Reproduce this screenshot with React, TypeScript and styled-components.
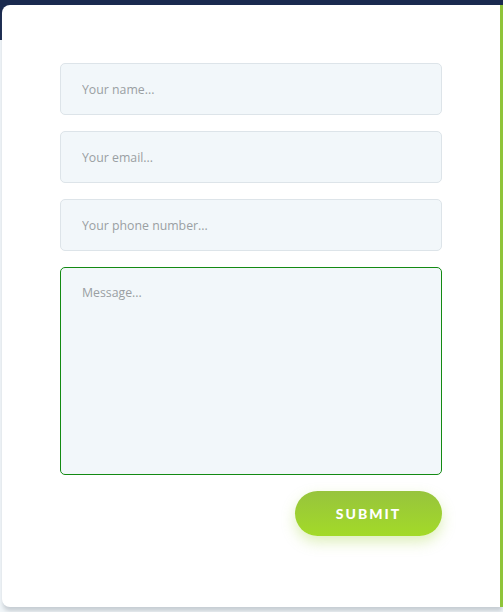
import React from "react";
import styled, { createGlobalStyle } from "styled-components";

const GlobalStyle = createGlobalStyle`
  html, body {
    margin: 0;
    padding: 0;
  }
  body {
    font-family: "Lato", "Noto Sans", sans-serif;
    overflow: hidden;
  }
`;

const Page = styled.div`
  width: 503px;
  height: 612px;
  background: linear-gradient(to bottom, #1a2a4f 0, #1a2a4f 40px, #f1f6f9 40px);
  padding: 5px 0 0 2px;
  box-sizing: border-box;
  overflow: hidden;
`;

const Card = styled.form`
  background: #fff;
  border-right: 3px solid #8fc43a;
  border-radius: 8px 0 0 8px;
  height: 602px;
  box-sizing: border-box;
  padding: 58px 58px 0 58px;
  display: flex;
  flex-direction: column;
  gap: 16px;
  box-shadow: 0 5px 4px -1px rgba(120, 130, 140, 0.35);
`;

const Field = styled.input`
  height: 52px;
  box-sizing: border-box;
  border: 1px solid #dde4e9;
  border-radius: 5px;
  background: #f2f7fa;
  padding: 0 21px;
  font-family: "Open Sans", "Noto Sans", sans-serif;
  font-size: 12.3px;
  color: #444;
  outline: none;
  &::placeholder {
    color: #9a9fa3;
  }
`;

const Message = styled.textarea<{ $active?: boolean }>`
  height: 208px;
  box-sizing: border-box;
  border: 1px solid ${(p) => (p.$active ? "#138a13" : "#dde4e9")};
  border-radius: 5px;
  background: #f2f7fa;
  padding: 16px 21px;
  font-family: "Open Sans", "Noto Sans", sans-serif;
  font-size: 12.3px;
  resize: none;
  outline: none;
  &::placeholder {
    color: #9a9fa3;
  }
`;

const Actions = styled.div`
  display: flex;
  justify-content: flex-end;
`;

const SubmitButton = styled.button`
  width: 147px;
  height: 45px;
  border: none;
  border-radius: 23px;
  background: linear-gradient(to bottom, #97c43d, #a3da28);
  color: #fff;
  font-family: "Lato", "Noto Sans", sans-serif;
  font-weight: 900;
  font-size: 14px;
  letter-spacing: 2px;
  box-shadow: 0 6px 14px rgba(160, 210, 60, 0.35);
  cursor: pointer;
`;

const App = () => {
  return (
    <>
      <GlobalStyle />
      <Page>
        <Card onSubmit={(e) => e.preventDefault()}>
          <Field placeholder="Your name..." />
          <Field placeholder="Your email..." />
          <Field placeholder="Your phone number..." />
          <Message placeholder="Message..." $active />
          <Actions>
            <SubmitButton type="submit">SUBMIT</SubmitButton>
          </Actions>
        </Card>
      </Page>
    </>
  );
};

export default App;
